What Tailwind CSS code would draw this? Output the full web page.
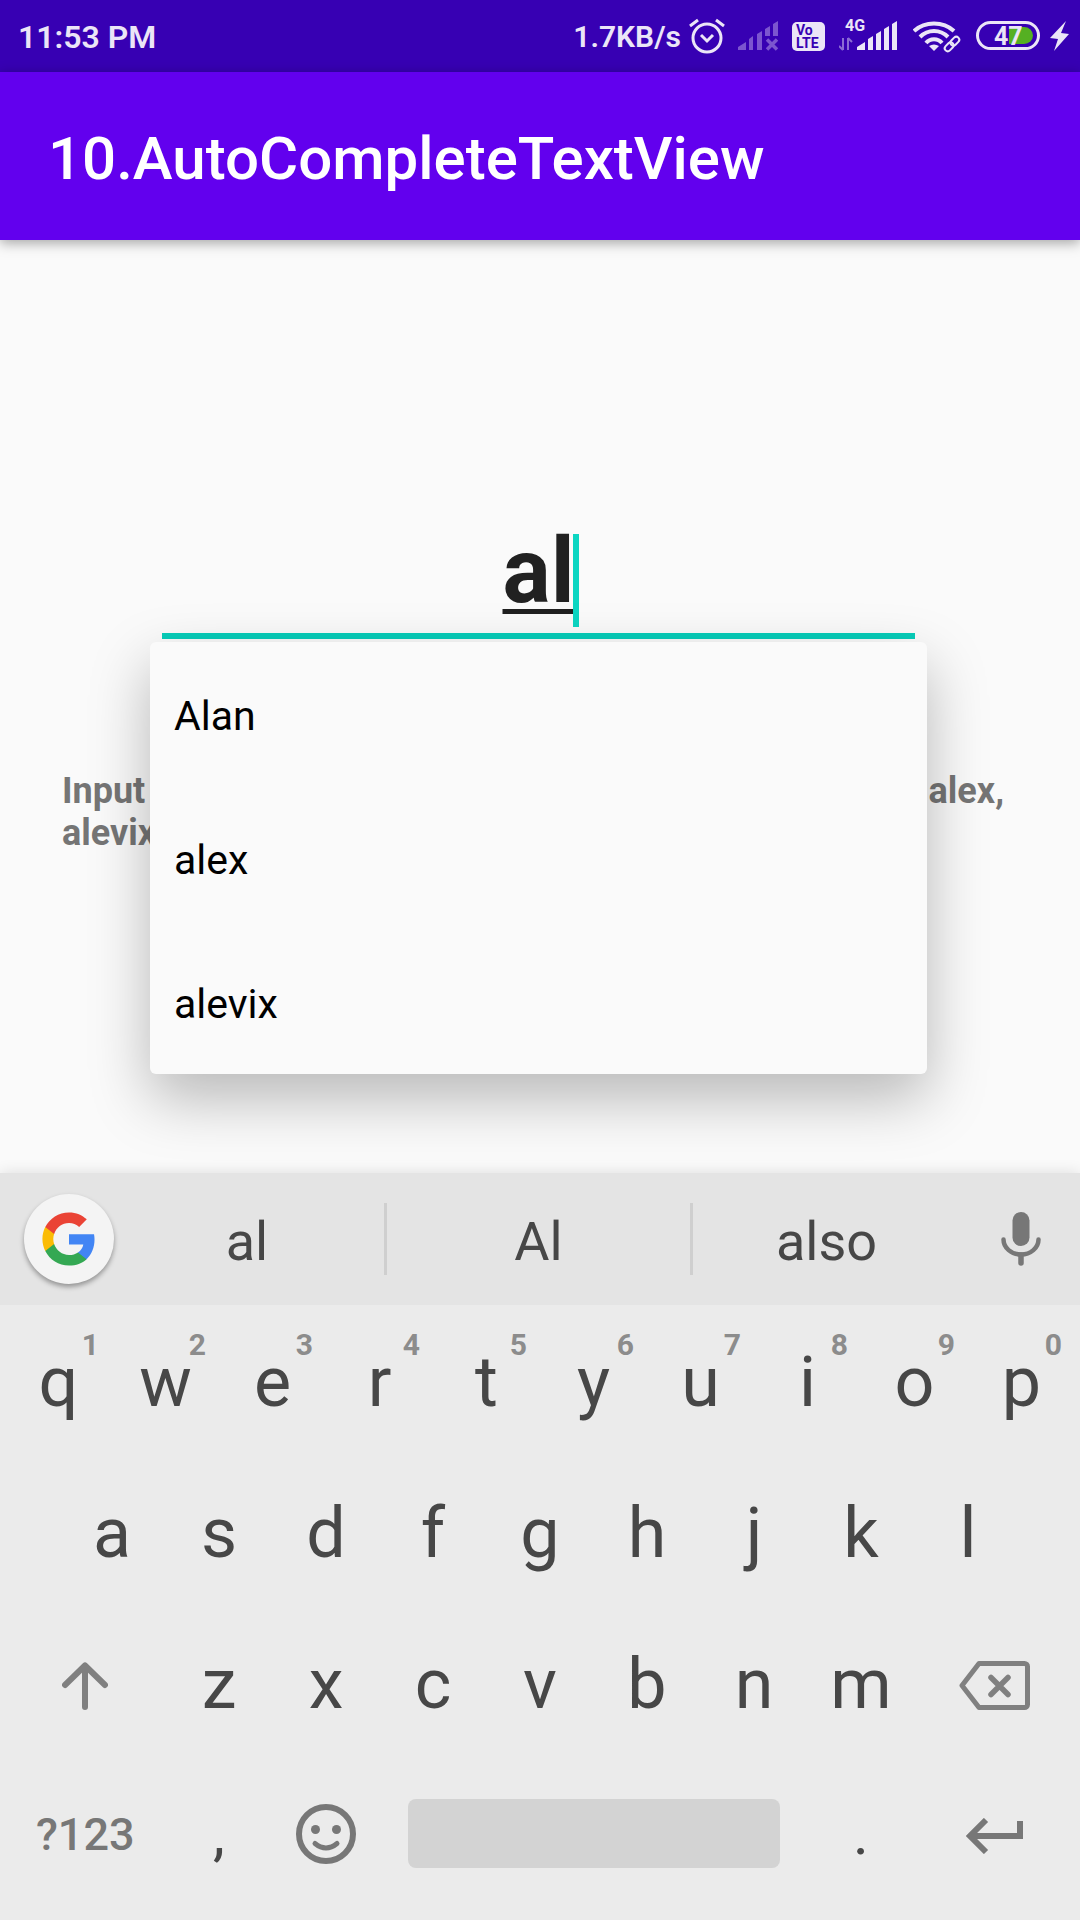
<!DOCTYPE html>
<html lang="en">
<head>
<meta charset="utf-8">
<meta name="viewport" content="width=device-width, initial-scale=1">
<title>10.AutoCompleteTextView</title>
<script src="https://cdn.jsdelivr.net/npm/@tailwindcss/browser@4"></script>
</head>
<body class="flex min-h-screen flex-col overflow-x-hidden bg-[#fafafa] font-['Roboto',sans-serif]">

<!-- Status bar -->
<div class="flex h-18 items-center justify-between bg-[#3700b3] pr-2 pl-[18px] text-[#ebe5f7]">
  <time class="pt-0.5 text-[32px] leading-10 font-semibold">11:53 PM</time>
  <div class="flex items-center gap-[7px]">
    <span class="pt-0.5 text-[30px] leading-10 font-semibold">1.7KB/s</span>
    <div class="flex items-center gap-3">
      <svg class="h-10 w-[38px]" viewBox="0 0 38 40" fill="none" stroke="currentColor" stroke-width="3" role="img" aria-label="Alarm set">
        <circle cx="19" cy="22" r="14"/>
        <path d="M13 19l6 6 6-6M2 10l8-6M28 4l8 6"/>
      </svg>
      <svg class="h-10 w-[42px] text-[#7c55cf]" viewBox="0 0 42 40" fill="currentColor" role="img" aria-label="SIM 1 no signal">
        <path d="M0 34v-3l8-5v8zM11 23l4-3v14h-4zM19 18l5-3v19h-5zM27 13l5-3v10h-5zM35 8l5-3v15h-5z"/>
        <path d="M29 23.500l10 10M39 23.500l-10 10" stroke="currentColor" stroke-width="3.500"/>
      </svg>
      <svg class="h-10 w-[35px]" viewBox="0 0 35 40" role="img" aria-label="VoLTE">
        <rect y="6" width="33" height="29" rx="5" fill="currentColor"/>
        <g fill="#3700b3" font-family="Roboto, sans-serif" font-weight="700" font-size="14">
          <text x="4" y="19">Vo</text>
          <text x="4" y="32">LTE</text>
        </g>
      </svg>
      <svg class="h-10 w-[62px]" viewBox="0 0 62 40" fill="currentColor" role="img" aria-label="4G full signal">
        <text x="6" y="15" font-family="Roboto, sans-serif" font-weight="700" font-size="16">4G</text>
        <path d="M4 34V22M4 34L0 30M9 22v12M9 22l4 4" stroke="#8b6bd4" stroke-width="2" fill="none"/>
        <path d="M18 34v-3l8-5v8zM29 23l5-3v14h-5zM37 18l5-3v19h-5zM45 13l5-3v24h-5zM53 8l5-3v29h-5z"/>
      </svg>
      <svg class="h-10 w-[51px]" viewBox="0 0 51 40" fill="none" stroke="currentColor" stroke-width="4" role="img" aria-label="Wi-Fi connected">
        <path d="M1 15c11-10 29-10 40 0M7 21c8-8 20-8 28 0M13 27c4-5 12-5 16 0"/>
        <path d="M16 30q5-3 10 0l-5 5z" fill="currentColor" stroke="none"/>
        <g stroke-width="2" transform="rotate(-45 39 28)">
          <rect x="30" y="25" width="10" height="6" rx="3"/>
          <rect x="38" y="25" width="10" height="6" rx="3"/>
        </g>
      </svg>
      <svg class="h-10 w-16" viewBox="0 0 64 40" role="img" aria-label="Battery 47 percent">
        <rect x="1.500" y="6.500" width="61" height="26" rx="13" fill="none" stroke="currentColor" stroke-width="3"/>
        <path d="M33 11h15a9 8.500 0 0 1 0 17H33z" fill="#55b022"/>
        <text x="18" y="29" font-family="Roboto, sans-serif" font-weight="700" font-size="25" fill="currentColor">47</text>
      </svg>
      <svg class="-ml-0.5 h-10 w-[22px]" viewBox="0 0 22 40" fill="currentColor" role="img" aria-label="Charging">
        <path d="M16 5L0 22l8 1-4 12 15-17-8-1z"/>
      </svg>
    </div>
  </div>
</div>

<!-- App bar -->
<header class="relative flex h-42 items-center bg-[#6200ee] px-12 pt-1.5 shadow-[0_3px_12px_rgba(0,0,0,0.35)]">
  <h1 class="text-[60px] leading-[70px] font-medium text-white">10.AutoCompleteTextView</h1>
</header>

<main class="flex-1 pt-[278px]">
  <div class="relative mr-[165px] ml-[162px]">
    <input id="name" type="text" value="al" aria-label="Name" aria-controls="names" autocomplete="off"
      class="block h-[121px] w-full border-b-6 border-[#07cdb9] bg-transparent pb-[9px] text-center text-[90px] leading-[106px] font-bold text-[#212121] underline decoration-[5px] underline-offset-[7px] outline-none [text-decoration-skip-ink:none]">
    <span class="absolute top-4 left-1/2 ml-[34px] h-[93px] w-[6px] bg-[#0cd6c2]"></span>
    <ul id="names" role="listbox" class="absolute -inset-x-3 top-full z-10 mt-[3px] rounded-md bg-[#fafafa] text-[41px] leading-[50px] text-black shadow-[0_24px_60px_rgba(0,0,0,0.27)]">
      <li role="option" class="flex h-36 items-center px-6 pt-1">Alan</li>
      <li role="option" class="flex h-36 items-center px-6 pt-1">alex</li>
      <li role="option" class="flex h-36 items-center px-6 pt-1">alevix</li>
    </ul>
  </div>
  <p class="mt-[131px] pr-[76px] pl-[62px] text-[36px] leading-[42px] font-bold text-[#757575]">
    <span class="flex justify-between"><span>Input</span><span>alex,</span></span>
    <span class="block">alevix</span>
  </p>
</main>

<!-- Keyboard -->
<section aria-label="Keyboard" class="relative bg-[#ebebeb] pb-3 text-[#474747] shadow-[0_0_14px_rgba(0,0,0,0.12)]">
  <div class="flex h-33 items-center bg-[#e4e4e4] text-[54px] leading-[64px]">
    <div class="w-[110px] shrink-0 pl-6">
      <button aria-label="Google search" class="flex size-[90px] items-center justify-center rounded-full bg-[#f4f4f4] shadow-[0_3px_5px_rgba(0,0,0,0.35)]">
        <svg class="size-[58px]" viewBox="0 0 24 24">
          <path fill="#4285F4" d="M22.560 12.250c0-.78-.07-1.530-.2-2.250H12v4.260h5.920c-.26 1.370-1.040 2.530-2.210 3.310v2.770h3.570c2.080-1.920 3.280-4.740 3.280-8.090z"/>
          <path fill="#34A853" d="M12 23c2.970 0 5.460-.98 7.280-2.660l-3.570-2.770c-.98.66-2.230 1.060-3.710 1.060-2.860 0-5.290-1.930-6.160-4.530H2.180v2.840C3.990 20.530 7.700 23 12 23z"/>
          <path fill="#FBBC05" d="M5.840 14.090c-.22-.66-.35-1.360-.35-2.090s.13-1.430.35-2.090V7.070H2.180C1.430 8.550 1 10.220 1 12s.43 3.450 1.180 4.930l3.660-2.840z"/>
          <path fill="#EA4335" d="M12 5.380c1.620 0 3.060.56 4.210 1.640l3.150-3.150C17.450 2.090 14.970 1 12 1 7.700 1 3.990 3.470 2.180 7.070l3.660 2.840c.87-2.600 3.300-4.530 6.160-4.530z"/>
        </svg>
      </button>
    </div>
    <button class="h-full flex-[274] pt-1.5">al</button>
    <span class="h-18 w-[3px] bg-[#cfcfcf]"></span>
    <button class="h-full flex-[303] pt-1.5">Al</button>
    <span class="h-18 w-[3px] bg-[#cfcfcf]"></span>
    <button class="h-full flex-[267] pt-1.5">also</button>
    <button aria-label="Voice input" class="flex h-full w-30 shrink-0 items-center justify-center text-[#777]">
      <svg class="h-[54px] w-11" viewBox="0 0 44 54" fill="none" stroke="currentColor" stroke-linecap="round">
        <rect x="14.500" width="17" height="34" rx="8.500" fill="currentColor" stroke="none"/>
        <path d="M5.500 27.500a17.500 15 0 0 0 35 0" stroke-width="4.500"/>
        <path d="M23 43v8" stroke-width="5.500"/>
      </svg>
    </button>
  </div>

  <div class="px-[5px] pt-px text-[70px] leading-[82px]">
    <div class="grid h-[151px] grid-cols-10">
      <button class="relative">q<sup class="absolute top-[21px] right-[13px] text-[30px] leading-[36px] font-bold text-[#8c8c8c]">1</sup></button>
      <button class="relative">w<sup class="absolute top-[21px] right-[13px] text-[30px] leading-[36px] font-bold text-[#8c8c8c]">2</sup></button>
      <button class="relative">e<sup class="absolute top-[21px] right-[13px] text-[30px] leading-[36px] font-bold text-[#8c8c8c]">3</sup></button>
      <button class="relative">r<sup class="absolute top-[21px] right-[13px] text-[30px] leading-[36px] font-bold text-[#8c8c8c]">4</sup></button>
      <button class="relative">t<sup class="absolute top-[21px] right-[13px] text-[30px] leading-[36px] font-bold text-[#8c8c8c]">5</sup></button>
      <button class="relative">y<sup class="absolute top-[21px] right-[13px] text-[30px] leading-[36px] font-bold text-[#8c8c8c]">6</sup></button>
      <button class="relative">u<sup class="absolute top-[21px] right-[13px] text-[30px] leading-[36px] font-bold text-[#8c8c8c]">7</sup></button>
      <button class="relative">i<sup class="absolute top-[21px] right-[13px] text-[30px] leading-[36px] font-bold text-[#8c8c8c]">8</sup></button>
      <button class="relative">o<sup class="absolute top-[21px] right-[13px] text-[30px] leading-[36px] font-bold text-[#8c8c8c]">9</sup></button>
      <button class="relative">p<sup class="absolute top-[21px] right-[13px] text-[30px] leading-[36px] font-bold text-[#8c8c8c]">0</sup></button>
    </div>
    <div class="grid h-[151px] grid-cols-9 px-[5%]">
      <button>a</button><button>s</button><button>d</button><button>f</button><button>g</button><button>h</button><button>j</button><button>k</button><button>l</button>
    </div>
    <div class="grid h-[151px] grid-cols-20">
      <button aria-label="Shift" class="col-span-3 flex items-center justify-center pt-1 text-[#808080]">
        <svg class="h-12 w-[46px]" viewBox="0 0 46 48" fill="none" stroke="currentColor" stroke-width="6" stroke-linecap="round" stroke-linejoin="round"><path d="M23 45V4M3 23L23 3.500 43 23"/></svg>
      </button>
      <button class="col-span-2">z</button><button class="col-span-2">x</button><button class="col-span-2">c</button><button class="col-span-2">v</button><button class="col-span-2">b</button><button class="col-span-2">n</button><button class="col-span-2">m</button>
      <button aria-label="Backspace" class="col-span-3 flex items-center justify-center pt-1 text-[#808080]">
        <svg class="h-[49px] w-[71px]" viewBox="0 0 71 49" fill="none" stroke="currentColor" stroke-width="5" stroke-linejoin="round"><path d="M20 2.500h45.500a3 3 0 0 1 3 3v38a3 3 0 0 1-3 3H20L3 24.500z"/><path d="M32 16.500l17 17M49 16.500l-17 17" stroke-linecap="round" stroke-width="5.500"/></svg>
      </button>
    </div>
    <div class="grid h-[149px] grid-cols-20 text-[60px]">
      <button class="col-span-3 pt-0.5 text-[45px] leading-[54px] font-medium text-[#777]">?123</button>
      <button class="col-span-2">,</button>
      <button aria-label="Emoji" class="col-span-2 flex items-center justify-center text-[#777]">
        <svg class="size-[60px]" viewBox="0 0 60 60" fill="none" stroke="currentColor"><circle cx="30" cy="30" r="27" stroke-width="6"/><circle cx="19.500" cy="25.500" r="4.500" fill="currentColor" stroke="none"/><circle cx="40.500" cy="25.500" r="4.500" fill="currentColor" stroke="none"/><path d="M19 39.500q11 9 22 0" stroke-width="5" stroke-linecap="round"/></svg>
      </button>
      <button aria-label="Space" class="col-span-8 mx-7 h-[69px] self-center rounded-lg bg-[#d3d3d3]"></button>
      <button class="col-span-2">.</button>
      <button aria-label="Enter" class="col-span-3 flex items-center justify-center pt-1 text-[#777]">
        <svg class="h-9 w-[57px]" viewBox="0 0 57 36" fill="none" stroke="currentColor" stroke-width="6"><path d="M54 3v15H5M20 2L4 18l16 16"/></svg>
      </button>
    </div>
  </div>
</section>
</body>
</html>
